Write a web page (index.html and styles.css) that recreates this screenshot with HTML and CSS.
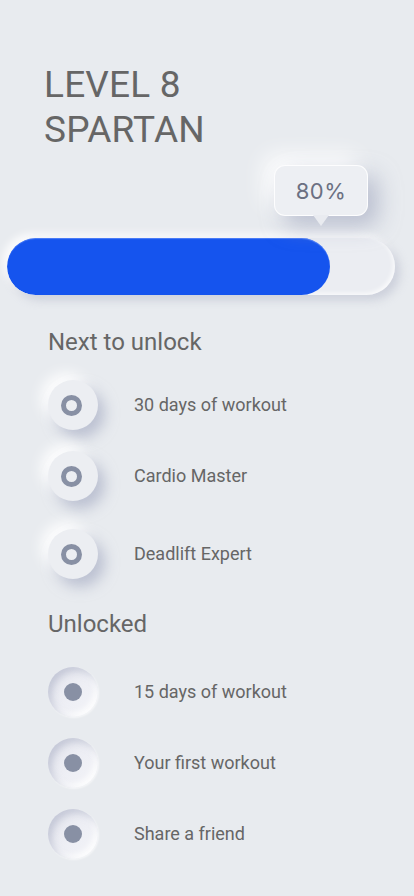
FILE: index.html
```html
<!DOCTYPE html>
<html lang="en">
<head>
<meta charset="utf-8">
<meta name="viewport" content="width=device-width, initial-scale=1">
<title>Level 8 Spartan</title>
<link rel="stylesheet" href="styles.css">
</head>
<body>
<main class="screen">
  <h1 class="level">LEVEL 8<br>SPARTAN</h1>

  <div class="progress">
    <div class="tip-row">
      <div class="tip">80%</div>
    </div>
    <div class="track">
      <div class="fill" style="width:83.2%"></div>
    </div>
  </div>

  <section class="group group-next">
    <h2 class="group-title">Next to unlock</h2>
    <ul class="list">
      <li class="item">
        <span class="badge raised"><span class="ring"></span></span>
        <span class="label">30 days of workout</span>
      </li>
      <li class="item">
        <span class="badge raised"><span class="ring"></span></span>
        <span class="label">Cardio Master</span>
      </li>
      <li class="item item-wide">
        <span class="badge raised"><span class="ring"></span></span>
        <span class="label">Deadlift Expert</span>
      </li>
    </ul>
  </section>

  <section class="group group-done">
    <h2 class="group-title">Unlocked</h2>
    <ul class="list">
      <li class="item">
        <span class="badge inset"><span class="dot"></span></span>
        <span class="label">15 days of workout</span>
      </li>
      <li class="item">
        <span class="badge inset"><span class="dot"></span></span>
        <span class="label">Your first workout</span>
      </li>
      <li class="item">
        <span class="badge inset"><span class="dot"></span></span>
        <span class="label">Share a friend</span>
      </li>
    </ul>
  </section>
</main>
</body>
</html>
```

FILE: styles.css
```css
* { box-sizing: border-box; }

html, body {
  margin: 0;
  padding: 0;
  background: #e8ebef;
}

body {
  font-family: Roboto, "Liberation Sans", Arial, sans-serif;
  color: #666666;
  width: 414px;
  min-height: 896px;
  overflow: hidden;
}

.screen {
  display: flex;
  flex-direction: column;
}

.level {
  margin: 62px 0 0 44px;
  font-size: 37px;
  font-weight: 400;
  line-height: 45px;
  color: #666666;
  letter-spacing: 0.2px;
}

.progress {
  margin-top: 13px;
  display: flex;
  flex-direction: column;
}

.tip-row {
  display: flex;
  justify-content: flex-end;
  padding-right: 46px;
  margin-bottom: 22px;
}

.tip {
  position: relative;
  width: 94px;
  height: 51px;
  border-radius: 11px;
  background: #edeff3;
  border: 1px solid rgba(255, 255, 255, 0.85);
  display: flex;
  align-items: center;
  justify-content: center;
  font-family: Inter, "Open Sans", sans-serif;
  font-size: 22px;
  font-weight: 400;
  letter-spacing: 0.5px;
  color: #6b7082;
  box-shadow: 10px 10px 22px rgba(155, 162, 186, 0.6),
              -10px -10px 22px rgba(255, 255, 255, 0.95);
}

.tip::after {
  content: "";
  position: absolute;
  left: 50%;
  bottom: -11px;
  margin-left: -8px;
  width: 0;
  height: 0;
  border-left: 8px solid transparent;
  border-right: 8px solid transparent;
  border-top: 11px solid #e9ebf0;
}

.track {
  margin: 0 19px 0 7px;
  height: 57px;
  border-radius: 29px;
  background: #ebedf2;
  box-shadow: 5px 5px 10px rgba(170, 176, 196, 0.45),
              -4px -4px 8px rgba(255, 255, 255, 0.9),
              inset -2px -2px 4px rgba(255, 255, 255, 0.7);
  overflow: hidden;
}

.fill {
  height: 100%;
  border-radius: 29px;
  background: #1554ee;
  box-shadow: inset 0 1px 1px rgba(120, 160, 255, 0.6);
}

.group {
  padding-left: 48px;
}

.group-next { margin-top: 33px; }
.group-done { margin-top: 31px; }

.group-title {
  margin: 0;
  font-size: 24px;
  font-weight: 400;
  line-height: 28px;
  color: #666666;
}

.list {
  list-style: none;
  margin: 24px 0 0;
  padding: 0;
  display: flex;
  flex-direction: column;
  gap: 21px;
}

.group-done .list { margin-top: 29px; }

.item {
  display: flex;
  align-items: center;
  gap: 36px;
  height: 50px;
}

.item-wide { margin-top: 7px; }

.badge {
  width: 50px;
  height: 50px;
  border-radius: 50%;
  flex: none;
  display: flex;
  align-items: center;
  justify-content: center;
}

.raised {
  background: #eceef2;
  box-shadow: 7px 8px 14px rgba(158, 165, 190, 0.6),
              -7px -7px 14px rgba(255, 255, 255, 0.95);
}

.inset {
  background: linear-gradient(135deg, #e3e4ec 0%, #eeeff5 55%, #f3f4f8 100%);
  box-shadow: inset 4px 4px 7px rgba(170, 174, 196, 0.55),
              inset -3px -3px 6px rgba(255, 255, 255, 0.95),
              1px 1px 2px rgba(255, 255, 255, 0.6);
}

.ring {
  width: 21px;
  height: 21px;
  border-radius: 50%;
  border: 5.5px solid #8890a4;
  margin-left: -3px;
}

.dot {
  width: 18px;
  height: 18px;
  border-radius: 50%;
  background: #8890a4;
}

.label {
  font-size: 18px;
  line-height: 22px;
  color: #666666;
}
```
